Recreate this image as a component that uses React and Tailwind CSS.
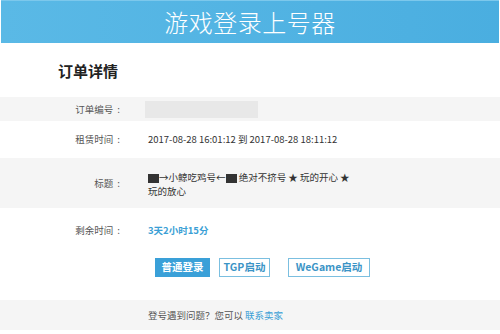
const font = { fontFamily: '"Noto Sans CJK SC", "Liberation Sans", sans-serif' }

function Row({ label, children, gray, h }) {
  return (
    <div className={`flex ${gray ? 'bg-[#f5f5f5]' : 'bg-white'} ${h}`}>
      <div className="w-[130px] shrink-0 pr-[10px] flex items-center justify-end text-[9.5px] text-[#555]">
        {label}
        <span className="ml-[4px]">:</span>
      </div>
      <div className="flex-1 pl-[18px] flex items-center text-[9.5px] text-[#333]">{children}</div>
    </div>
  )
}

export default function App() {
  return (
    <div className="w-[500px] h-[334px] bg-white overflow-hidden" style={font}>
      {/* Header */}
      <div className="h-[43px] mx-[1px] bg-gradient-to-r from-[#5ab9e6] to-[#4aaee0] border-t border-[#7cc8ec] flex items-center justify-center">
        <span className="text-white text-[24px] font-light leading-none tracking-[0.5px]">游戏登录上号器</span>
      </div>

      <div className="pt-[20px] pl-[58px] h-[54px]">
        <h1 className="text-[15px] font-bold text-[#222] leading-none">订单详情</h1>
      </div>

      <Row label="订单编号" gray h="h-[24px]">
        <div className="w-[113px] h-[17px] bg-[#e8e8e8] -ml-[3px]" />
      </Row>
      <Row label="租赁时间" h="h-[37px]">
        2017-08-28 16:01:12 到 2017-08-28 18:11:12
      </Row>
      <Row label="标题" gray h="h-[50px]">
        <div className="leading-[14px] pt-[2px]">
          <div>
            <span className="inline-block w-[11px] h-[9px] bg-[#333] align-middle" />
            →小鲸吃鸡号←
            <span className="inline-block w-[11px] h-[9px] bg-[#333] align-middle" /> 绝对不挤号 ★ 玩的开心 ★
          </div>
          <div>玩的放心</div>
        </div>
      </Row>
      <Row label="剩余时间" h="h-[45px]">
        <span className="text-[#3b9fd5] font-bold">3天2小时15分</span>
      </Row>

      <div className="flex items-center pl-[155px] h-[20px] mt-[4px] text-[10.5px] font-bold">
        <button className="w-[55px] h-[19px] bg-[#3aa0d8] text-white">普通登录</button>
        <button className="ml-[9px] w-[51px] h-[19px] border border-[#7bbfe0] text-[#3b94c6]">TGP启动</button>
        <button className="ml-[18px] w-[82px] h-[19px] border border-[#7bbfe0] text-[#3b94c6]">WeGame启动</button>
      </div>

      <div className="mt-[23px] h-[30px] bg-[#f5f5f5] flex items-center pl-[148px] text-[9.5px] text-[#555]">
        登号遇到问题？您可以 <span className="text-[#3b9fd5] ml-[2px]">联系卖家</span>
      </div>
    </div>
  )
}
